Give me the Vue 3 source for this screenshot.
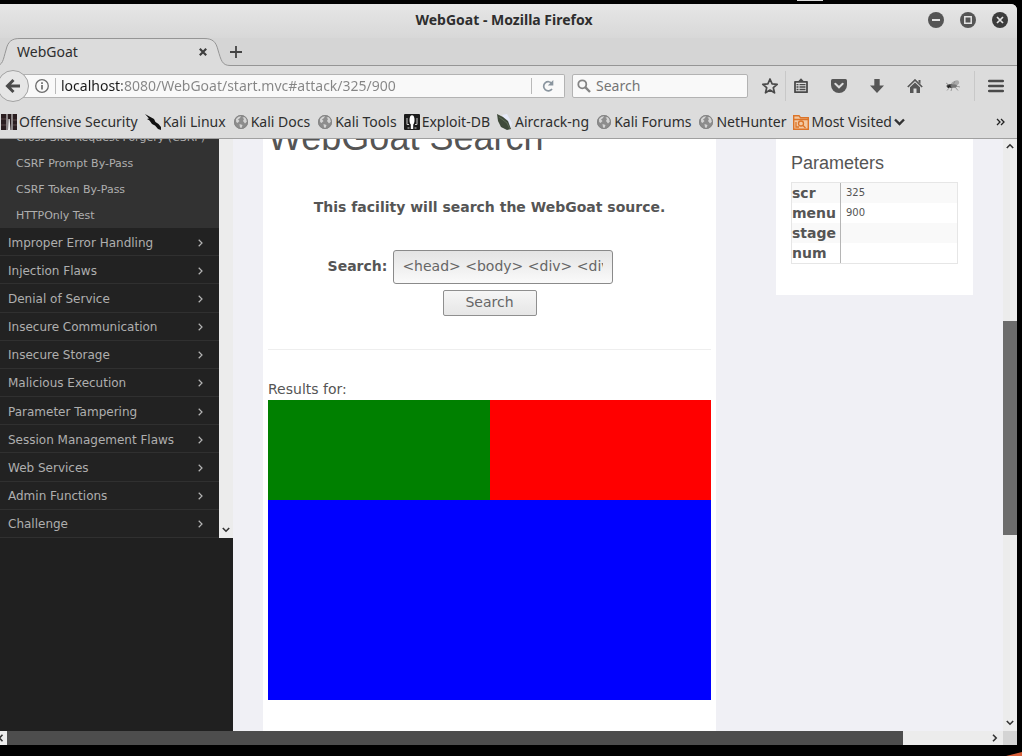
<script setup>
import { ref } from 'vue'

const url = ref('localhost:8080/WebGoat/start.mvc#attack/325/900')
const webSearch = ref('')
const query = ref('<head> <body> <div> <div style="background:green">')

const bookmarks = [
  { label: 'Offensive Security', icon: 'offsec' },
  { label: 'Kali Linux', icon: 'kali' },
  { label: 'Kali Docs', icon: 'globe' },
  { label: 'Kali Tools', icon: 'globe' },
  { label: 'Exploit-DB', icon: 'exploit' },
  { label: 'Aircrack-ng', icon: 'aircrack' },
  { label: 'Kali Forums', icon: 'globe' },
  { label: 'NetHunter', icon: 'globe' },
  { label: 'Most Visited', icon: 'folder' },
]

const lessons = [
  'Cross Site Request Forgery (CSRF)',
  'CSRF Prompt By-Pass',
  'CSRF Token By-Pass',
  'HTTPOnly Test',
]

const categories = [
  'Improper Error Handling',
  'Injection Flaws',
  'Denial of Service',
  'Insecure Communication',
  'Insecure Storage',
  'Malicious Execution',
  'Parameter Tampering',
  'Session Management Flaws',
  'Web Services',
  'Admin Functions',
  'Challenge',
]

const params = [
  { name: 'scr', value: '325' },
  { name: 'menu', value: '900' },
  { name: 'stage', value: '' },
  { name: 'num', value: '' },
]
</script>

<template>
  <div class="desktop">
    <span class="corner-light"></span>
    <span class="corner-orange"></span>
    <div class="window">
      <header class="titlebar">
        <span class="side"></span>
        <span class="title">WebGoat - Mozilla Firefox</span>
        <span class="side controls">
          <button aria-label="Minimize">
            <svg width="16" height="16" viewBox="0 0 16 16"><circle cx="8" cy="8" r="8" fill="#555" /><path d="M4 8h8" stroke="#e4e4e4" stroke-width="2" /></svg>
          </button>
          <button aria-label="Maximize">
            <svg width="16" height="16" viewBox="0 0 16 16"><circle cx="8" cy="8" r="8" fill="#555" /><path d="M4.8 4.8h6.4v6.4h-6.4z" fill="none" stroke="#e4e4e4" stroke-width="1.5" /></svg>
          </button>
          <button aria-label="Close">
            <svg width="16" height="16" viewBox="0 0 16 16"><circle cx="8" cy="8" r="8" fill="#3c3c3c" /><path d="M5 5l6 6M11 5l-6 6" stroke="#e4e4e4" stroke-width="1.7" /></svg>
          </button>
        </span>
      </header>

      <nav class="tabs">
        <div class="tab">
          <svg class="tab-shape" width="232" height="29" viewBox="0 0 232 29">
            <path d="M-4 27.5C3 27.5 3 22 6 12C8 3 12 .5 20 .5H204C213 .5 216 4 218 12C221 22 222 27.5 230 27.5H232V29H-4z" fill="#dcdcdc" />
            <path d="M-4 27.5C3 27.5 3 22 6 12C8 3 12 .5 20 .5H204C213 .5 216 4 218 12C221 22 222 27.5 230 27.5H232" fill="none" stroke="#959595" />
          </svg>
          <span class="tab-label">WebGoat</span>
          <button class="tab-close" aria-label="Close tab">
            <svg width="8" height="8" viewBox="0 0 8 8"><path d="M.8 .8l6.4 6.4M7.2 .8L.8 7.2" stroke="#3f3f3f" stroke-width="2.2" /></svg>
          </button>
        </div>
        <div class="tab-rest">
          <button class="new-tab" aria-label="New tab">
            <svg width="12" height="12" viewBox="0 0 12 12"><path d="M6 0v12M0 6h12" stroke="#444" stroke-width="1.8" /></svg>
          </button>
        </div>
      </nav>

      <div class="toolbar">
        <button class="back" aria-label="Back">
          <svg width="16" height="16" viewBox="0 0 16 16"><path d="M8.5 2L2.5 8l6 6M2.5 8H15" fill="none" stroke="#4a4a4a" stroke-width="3" /></svg>
        </button>
        <div class="urlbox">
          <svg width="14" height="14" viewBox="0 0 14 14"><circle cx="7" cy="7" r="6.3" fill="none" stroke="#6b6b6b" stroke-width="1.3" /><path d="M7 6v4.5M7 3.2v1.7" stroke="#6b6b6b" stroke-width="1.7" /></svg>
          <span class="sep"></span>
          <input v-model="url" class="url" aria-label="Address" />
          <span class="sep"></span>
          <button class="reload" aria-label="Reload">
            <svg width="12" height="12" viewBox="0 0 12 12"><path d="M10 3.6A4.6 4.6 0 1 0 10 9" fill="none" stroke="#8a959f" stroke-width="1.7" /><path d="M11.3 0v5.6H5.8z" fill="#8a959f" /></svg>
          </button>
        </div>
        <label class="searchbox">
          <svg width="14" height="14" viewBox="0 0 14 14"><circle cx="5.3" cy="5.3" r="4" fill="none" stroke="#858585" stroke-width="1.8" /><path d="M8.2 8.2l4.8 4.8" stroke="#858585" stroke-width="2.4" /></svg>
          <input v-model="webSearch" placeholder="Search" aria-label="Web search" />
        </label>
        <div class="tools">
          <button class="tool star" aria-label="Bookmark this page">
            <svg width="18" height="18" viewBox="0 0 18 18"><path d="M9 2l2.1 4.8 5.1.5-3.9 3.4 1.2 5.1L9 13.1l-4.5 2.7 1.2-5.1L1.8 7.3l5.1-.5z" fill="none" stroke="#4a4a4a" stroke-width="1.7" stroke-linejoin="round" /></svg>
          </button>
          <button class="tool list" aria-label="Bookmarks">
            <svg width="16" height="16" viewBox="0 0 16 16"><path d="M2 3.8h12v10.4H2z" fill="none" stroke="#4a4a4a" stroke-width="1.8" stroke-linejoin="round" /><path d="M5 3.5L8 .3l3 3.2z" fill="#4a4a4a" /><path d="M3.5 6.6h2m1 0h6M3.5 9h2m1 0h6M3.5 11.5h2m1 0h6" stroke="#4a4a4a" stroke-width="1.3" /></svg>
          </button>
          <button class="tool" aria-label="Pocket">
            <svg width="16" height="14" viewBox="0 0 16 14"><path d="M1.5 0h13Q16 0 16 1.5V6A8 8 0 0 1 0 6V1.5Q0 0 1.5 0z" fill="#565656" /><path d="M4.3 4.8L8 8.3l3.7-3.5" fill="none" stroke="#dcdcdc" stroke-width="2" stroke-linecap="round" /></svg>
          </button>
          <button class="tool" aria-label="Downloads">
            <svg width="14" height="14" viewBox="0 0 14 14"><path d="M4.3 0h5.4v6.5H14L7 14 0 6.5h4.3z" fill="#565656" /></svg>
          </button>
          <button class="tool" aria-label="Home">
            <svg width="16" height="14" viewBox="0 0 16 14"><path d="M8 3.5L3 8.2V14h3.5V9.5h3V14H13V8.2z" fill="#565656" /><path d="M.8 8L8 1l7.2 7" fill="none" stroke="#565656" stroke-width="1.7" /><path d="M11.5 1h2v4l-2-2z" fill="#565656" /></svg>
          </button>
          <button class="tool" aria-label="Firebug">
            <svg width="16" height="14" viewBox="0 0 16 14"><ellipse cx="10" cy="4.5" rx="4.5" ry="2.5" fill="#aaa" transform="rotate(-28 10 4.5)" /><ellipse cx="5" cy="7" rx="3.5" ry="2" fill="#555" /><ellipse cx="9" cy="7" rx="3" ry="1.8" fill="#777" /><circle cx="4" cy="7.5" r="1.5" fill="#222" /><path d="M5 8l-3 3.5M7 8.5L6 12M10 8l3 3.5M8 6l2-4M4 6L1 4M11 7l4 1" stroke="#888" stroke-width=".8" /></svg>
          </button>
          <button class="tool menu" aria-label="Open menu">
            <svg width="16" height="14" viewBox="0 0 16 14"><path d="M1.2 2h13.6M1.2 7h13.6M1.2 12h13.6" stroke="#4a4a4a" stroke-width="2.6" stroke-linecap="round" /></svg>
          </button>
        </div>
      </div>

      <div class="bookmarks">
        <a v-for="b in bookmarks" :key="b.label" href="#" class="bookmark">
          <svg width="16" height="16" viewBox="0 0 16 16">
            <g v-if="b.icon === 'offsec'">
              <path d="M0 0h16v16H0z" fill="#2b1e20" />
              <path d="M5.5 0h1v16h-1zM10.5 0h1v16h-1zM7.5 5h1.2l.8 11H7z" fill="#eee" />
              <path d="M0 5h5M12 6h4M0 11h5M12 11h4" stroke="#5a4648" />
            </g>
            <path v-else-if="b.icon === 'kali'" d="M0 0l4.5 2.5L9 5l1.5 3 3 2 2.5 3v3l-3-1-3-3.500L7 10 4.500 6.500 2 5l2-.5z" fill="#111" />
            <g v-else-if="b.icon === 'globe'">
              <circle cx="8" cy="8" r="7" fill="#8d8d8d" />
              <path d="M3 5Q5 2 8 2L7 4 5 5.5 6.5 7 4.5 9Q2.5 8 3 5zM9.5 3.5l2.5-.5q2 2 2 4.5L12 9.5 10 7l1-2zM6.5 10l3 1-1 3-1.5-.5z" fill="#d4d4d4" />
              <circle cx="8" cy="8" r="6.5" fill="none" stroke="#858585" />
            </g>
            <g v-else-if="b.icon === 'exploit'">
              <rect width="16" height="16" rx="1" fill="#1c1c1c" />
              <ellipse cx="8" cy="6" rx="2.5" ry="4.8" fill="#fff" />
              <path d="M6.8 9h2.4v6H6.8z" fill="#fff" />
              <path d="M3 4v6.5h2M13 4v6.5h-2M3.5 14h2M10.5 14h2" fill="none" stroke="#ccc" />
            </g>
            <g v-else-if="b.icon === 'aircrack'">
              <path d="M5 1l5-1 5 9-1 6z" fill="#e6eaf8" />
              <path d="M0 0l6 3 5 4 3 8-4 1-6-3-3-6z" fill="#3f4a3a" />
              <path d="M2 3l8 6 3 6" fill="none" stroke="#5d6a54" />
            </g>
            <g v-else>
              <path d="M.7 1.7h5.3l1.5 2h7.8v11.6H.7z" fill="#f3c9a2" stroke="#dc7428" stroke-width="1.4" />
              <path d="M1 5.5h14" stroke="#dc7428" stroke-width="1.4" />
              <circle cx="8" cy="9.5" r="2.5" fill="none" stroke="#dc7428" stroke-width="1.3" />
              <path d="M10 11.5l2.5 2.5M3 8v5h3" fill="none" stroke="#dc7428" stroke-width="1.3" />
            </g>
          </svg>
          <span>{{ b.label }}</span>
          <svg v-if="b.icon === 'folder'" width="11" height="8" viewBox="0 0 11 8"><path d="M1 1.5L5.5 6 10 1.5" fill="none" stroke="#333" stroke-width="2.4" /></svg>
        </a>
        <button class="overflow" aria-label="More bookmarks">
          <svg width="9" height="8" viewBox="0 0 9 8"><path d="M1 1l3 3-3 3M5 1l3 3-3 3" fill="none" stroke="#222" stroke-width="1.3" /></svg>
        </button>
      </div>

      <div class="viewport">
        <aside class="sidebar">
          <div class="sidebar-scroll">
            <div class="menu-list">
              <ul class="lessons">
                <li v-for="l in lessons" :key="l"><a href="#">{{ l }}</a></li>
              </ul>
              <ul class="categories">
                <li v-for="c in categories" :key="c">
                  <a href="#">
                    <span>{{ c }}</span>
                    <svg width="5" height="8" viewBox="0 0 5 8"><path d="M.7 .8L4 4 .7 7.2" fill="none" stroke="#b4b4b4" stroke-width="1.2" /></svg>
                  </a>
                </li>
              </ul>
            </div>
            <div class="side-track">
              <svg width="8" height="6" viewBox="0 0 8 6"><path d="M.8 1L4 4.2 7.2 1" fill="none" stroke="#333" stroke-width="1.6" /></svg>
            </div>
          </div>
        </aside>

        <main class="page">
          <section class="lesson">
            <h1>WebGoat Search</h1>
            <p class="intro">This facility will search the WebGoat source.</p>
            <form @submit.prevent>
              <div class="field">
                <label for="q">Search:</label>
                <input id="q" v-model="query" />
              </div>
              <button class="submit">Search</button>
            </form>
            <hr />
            <p class="results">Results for:</p>
            <div class="blocks">
              <div class="green"></div>
              <div class="red"></div>
              <div class="blue"></div>
            </div>
          </section>
          <section class="params">
            <h4>Parameters</h4>
            <table>
              <tbody>
                <tr v-for="p in params" :key="p.name">
                  <th scope="row">{{ p.name }}</th>
                  <td>{{ p.value }}</td>
                </tr>
              </tbody>
            </table>
          </section>
        </main>

        <div class="vtrack">
          <svg width="8" height="6" viewBox="0 0 8 6"><path d="M.8 5L4 1.8 7.2 5" fill="none" stroke="#333" stroke-width="1.6" /></svg>
          <div class="vrail"><div class="vthumb"></div></div>
          <svg width="8" height="6" viewBox="0 0 8 6"><path d="M.8 1L4 4.2 7.2 1" fill="none" stroke="#333" stroke-width="1.6" /></svg>
        </div>
      </div>

      <div class="htrack">
        <span class="hleft"><svg width="4" height="8" viewBox="0 0 4 8"><path d="M2.5 .8L-.5 4l3 3.2" fill="none" stroke="#333" stroke-width="1.6" /></svg></span>
        <div class="hrail"><div class="hthumb"></div></div>
        <span class="hright"><svg width="6" height="8" viewBox="0 0 6 8"><path d="M1 .8L4.2 4 1 7.2" fill="none" stroke="#333" stroke-width="1.6" /></svg></span>
        <span class="hcorner"></span>
      </div>
    </div>
  </div>
</template>

<style>
body {
  margin: 0;
  background: #000;
}
</style>

<style scoped>
* {
  box-sizing: border-box;
}
button {
  border: 0;
  padding: 0;
  background: none;
  font: inherit;
  color: inherit;
}
button svg {
  display: block;
}
ul {
  list-style: none;
  margin: 0;
  padding: 0;
}
a {
  color: inherit;
  text-decoration: none;
}
.desktop {
  position: relative;
  display: flex;
  height: 100vh;
  padding: 4px 5px 11px 0;
  background: #000;
  overflow: hidden;
}
.corner-light {
  position: absolute;
  top: 0;
  right: 199px;
  width: 26px;
  height: 1px;
  background: #ddd;
}
.corner-orange {
  position: absolute;
  right: 0;
  bottom: 0;
  width: 16px;
  height: 4px;
  background: #d9603a;
  clip-path: polygon(0 100%, 100% 0, 100% 100%);
}
.window {
  flex: 1;
  min-width: 0;
  display: flex;
  flex-direction: column;
  border-radius: 0 6px 0 0;
  overflow: hidden;
  background: #dcdcdc;
  font-family: "Noto Sans", "Open Sans", sans-serif;
  font-size: 14px;
  color: #2e2e2e;
}
.titlebar {
  display: flex;
  align-items: center;
  height: 34px;
  padding-bottom: 2px;
  background: linear-gradient(#e6e6e6, #d8d8d8);
}
.side {
  flex: 1;
}
.title {
  padding-bottom: 2px;
  font-weight: 700;
}
.controls {
  display: flex;
  justify-content: flex-end;
  gap: 16px;
  padding-right: 9px;
}
.tabs {
  display: flex;
  height: 28px;
  background: #d5d5d5;
}
.tab {
  position: relative;
  display: flex;
  align-items: center;
  width: 229px;
  padding: 0 22px 0 17px;
}
.tab-shape {
  position: absolute;
  left: 0;
  top: 0;
}
.tab-label {
  position: relative;
  flex: 1;
  padding-bottom: 2px;
}
.tab-close {
  position: relative;
}
.tab-rest {
  flex: 1;
  display: flex;
  align-items: center;
  border-bottom: 1px solid #959595;
}
.tab-rest .new-tab {
  margin-left: 1px;
}
.toolbar {
  display: flex;
  align-items: center;
  height: 40px;
}
.back {
  position: relative;
  display: flex;
  align-items: center;
  justify-content: center;
  width: 32px;
  height: 32px;
  margin: 0 -6px 0 -3px;
  border: 1px solid #a2a2a2;
  border-radius: 50%;
  background: #e6e6e6;
}
.urlbox {
  flex: 529 1 0;
  min-width: 0;
  display: flex;
  align-items: center;
  height: 24px;
  padding-left: 12px;
  border: 1px solid #b3b3b3;
  border-left: 0;
  border-radius: 0 2px 2px 0;
  background: #f9f9f9;
}
.sep {
  width: 1px;
  height: 16px;
  margin-left: 6px;
  background: #b9b9b9;
}
.url {
  flex: 1;
  min-width: 0;
  margin-left: 5px;
  padding: 0 0 2px;
  border: 0;
  outline: 0;
  font: inherit;
  color: #858585;
  background: linear-gradient(90deg, #1a1a1a 61px, #858585 61px);
  background-clip: text;
  -webkit-text-fill-color: transparent;
}
.reload {
  padding: 0 10px;
}
.searchbox {
  flex: 166 1 0;
  min-width: 0;
  display: flex;
  align-items: center;
  gap: 5px;
  height: 24px;
  margin-left: 7px;
  padding: 0 4px;
  border: 1px solid #b3b3b3;
  border-radius: 2px;
  background: #f9f9f9;
}
.searchbox input {
  flex: 1;
  min-width: 0;
  padding: 0 0 2px;
  border: 0;
  outline: 0;
  font: inherit;
  background: transparent;
}
.searchbox input::placeholder {
  color: #757575;
}
.tools {
  display: flex;
  align-items: center;
  padding: 0 1px 0 10px;
}
.tool {
  display: flex;
  align-items: center;
  justify-content: center;
  width: 38px;
  height: 30px;
}
.star {
  width: 27px;
  padding-right: 3px;
}
.list {
  width: 35px;
  padding-right: 5px;
  border-left: 1px solid #c8c8c8;
}
.menu {
  width: 42px;
  margin-left: 2px;
  border-left: 1px solid #c8c8c8;
}
.bookmarks {
  display: flex;
  align-items: center;
  gap: 7px;
  height: 33px;
  padding: 0 12px 0 1px;
  border-bottom: 1px solid #a0a0a0;
}
.bookmark {
  display: flex;
  align-items: center;
  gap: 2px;
  white-space: nowrap;
}
.bookmark span {
  padding-bottom: 2px;
}
.overflow {
  margin-left: auto;
}
.viewport {
  flex: 1;
  min-height: 0;
  display: flex;
  overflow: hidden;
  background: #f0f0f5;
}
.sidebar {
  width: 233px;
  background: #202020;
  font-family: "DejaVu Sans", sans-serif;
}
.sidebar-scroll {
  display: flex;
  height: 399px;
  overflow: hidden;
}
.menu-list {
  flex: 1;
  display: flex;
  flex-direction: column;
  justify-content: flex-end;
  color: #afafaf;
}
.lessons {
  flex: none;
  background: #323232;
}
.lessons a {
  display: block;
  padding: 2px 0 0 16px;
  font-size: 11px;
  line-height: 24px;
  white-space: nowrap;
}
.categories {
  flex: none;
  display: grid;
  grid-auto-rows: 1fr;
  height: 310px;
  background: #222;
  font-size: 12px;
}
.categories li {
  border-bottom: 1px solid #303030;
}
.categories a {
  display: flex;
  align-items: center;
  justify-content: space-between;
  height: 100%;
  padding: 2px 16px 0 8px;
}
.side-track {
  display: flex;
  align-items: flex-end;
  justify-content: center;
  width: 14px;
  padding-bottom: 5px;
  background: #ececec;
}
.page {
  flex: 1;
  min-width: 0;
  display: flex;
  align-items: flex-start;
  gap: 60px;
  padding: 0 30px;
  font-family: "DejaVu Sans", sans-serif;
  color: #555;
}
.lesson {
  flex: 443 1 0;
  min-width: 0;
  align-self: stretch;
  padding: 0 5px;
  background: #fff;
}
h1 {
  margin: -21px 0 0;
  font: 36px/40px "Liberation Sans", Arial, sans-serif;
}
.intro {
  margin: 39px 0 33px;
  font-size: 14px;
  font-weight: 700;
  line-height: 20px;
  text-align: center;
}
form {
  display: flex;
  flex-direction: column;
  align-items: center;
  gap: 6px;
}
.field {
  display: flex;
  align-items: center;
  gap: 6px;
  margin-right: 38px;
}
.field label {
  padding-bottom: 2px;
  font-size: 14px;
  font-weight: 700;
}
.field input {
  width: 220px;
  height: 34px;
  padding: 0 9px 2px 8px;
  border: 1px solid #8a8a8a;
  border-radius: 3px;
  background: linear-gradient(#e4e4e4, #fafafa);
  font: 14px "DejaVu Sans", sans-serif;
  color: #666;
}
.submit {
  width: 94px;
  height: 26px;
  padding-bottom: 2px;
  border: 1px solid #8f8f8f;
  border-radius: 2px;
  background: linear-gradient(#f6f6f6, #e6e6e6);
  font-size: 14px;
  color: #666;
}
hr {
  margin: 33px 0 29px;
  border: 0;
  border-top: 1px solid #eee;
}
.results {
  margin: 0;
  font-size: 14px;
  line-height: 20px;
}
.blocks {
  display: grid;
  grid-template-columns: 1fr 1fr;
  grid-template-rows: 100px 200px;
  margin-top: 1px;
}
.green {
  background: #008000;
}
.red {
  background: #f00;
}
.blue {
  grid-column: 1 / 3;
  background: #00f;
}
.params {
  flex: 167 1 0;
  min-width: 0;
  padding: 12px 15px 31px;
  background: #fff;
}
h4 {
  margin: 0 0 7px;
  font: 18px/24px "Liberation Sans", Arial, sans-serif;
}
table {
  width: 100%;
  border: 1px solid #e6e6e6;
  border-spacing: 0;
}
th,
td {
  height: 20px;
  padding: 0;
  line-height: 20px;
  text-align: left;
}
th {
  width: 49px;
  border-right: 1px solid #b5b5b5;
  font-size: 14px;
}
td {
  padding-left: 5px;
  font-size: 10px;
}
tr:nth-child(odd) {
  background: #f9f9f9;
}
.vtrack {
  display: flex;
  flex-direction: column;
  align-items: center;
  width: 14px;
  padding: 4px 0 5px;
  background: #ececec;
}
.vrail {
  flex: 1;
  width: 100%;
  padding-top: 172px;
}
.vthumb {
  height: 214px;
  background: #6c6c6c;
}
.htrack {
  display: flex;
  height: 14px;
  background: #ececec;
}
.hleft {
  display: flex;
  align-items: center;
  width: 7px;
}
.hrail {
  flex: 1;
}
.hthumb {
  width: 91%;
  height: 100%;
  background: #4d4d4d;
}
.hright {
  display: flex;
  align-items: center;
  width: 11px;
}
.hcorner {
  width: 14px;
  background: #d4d4d4;
}
</style>
